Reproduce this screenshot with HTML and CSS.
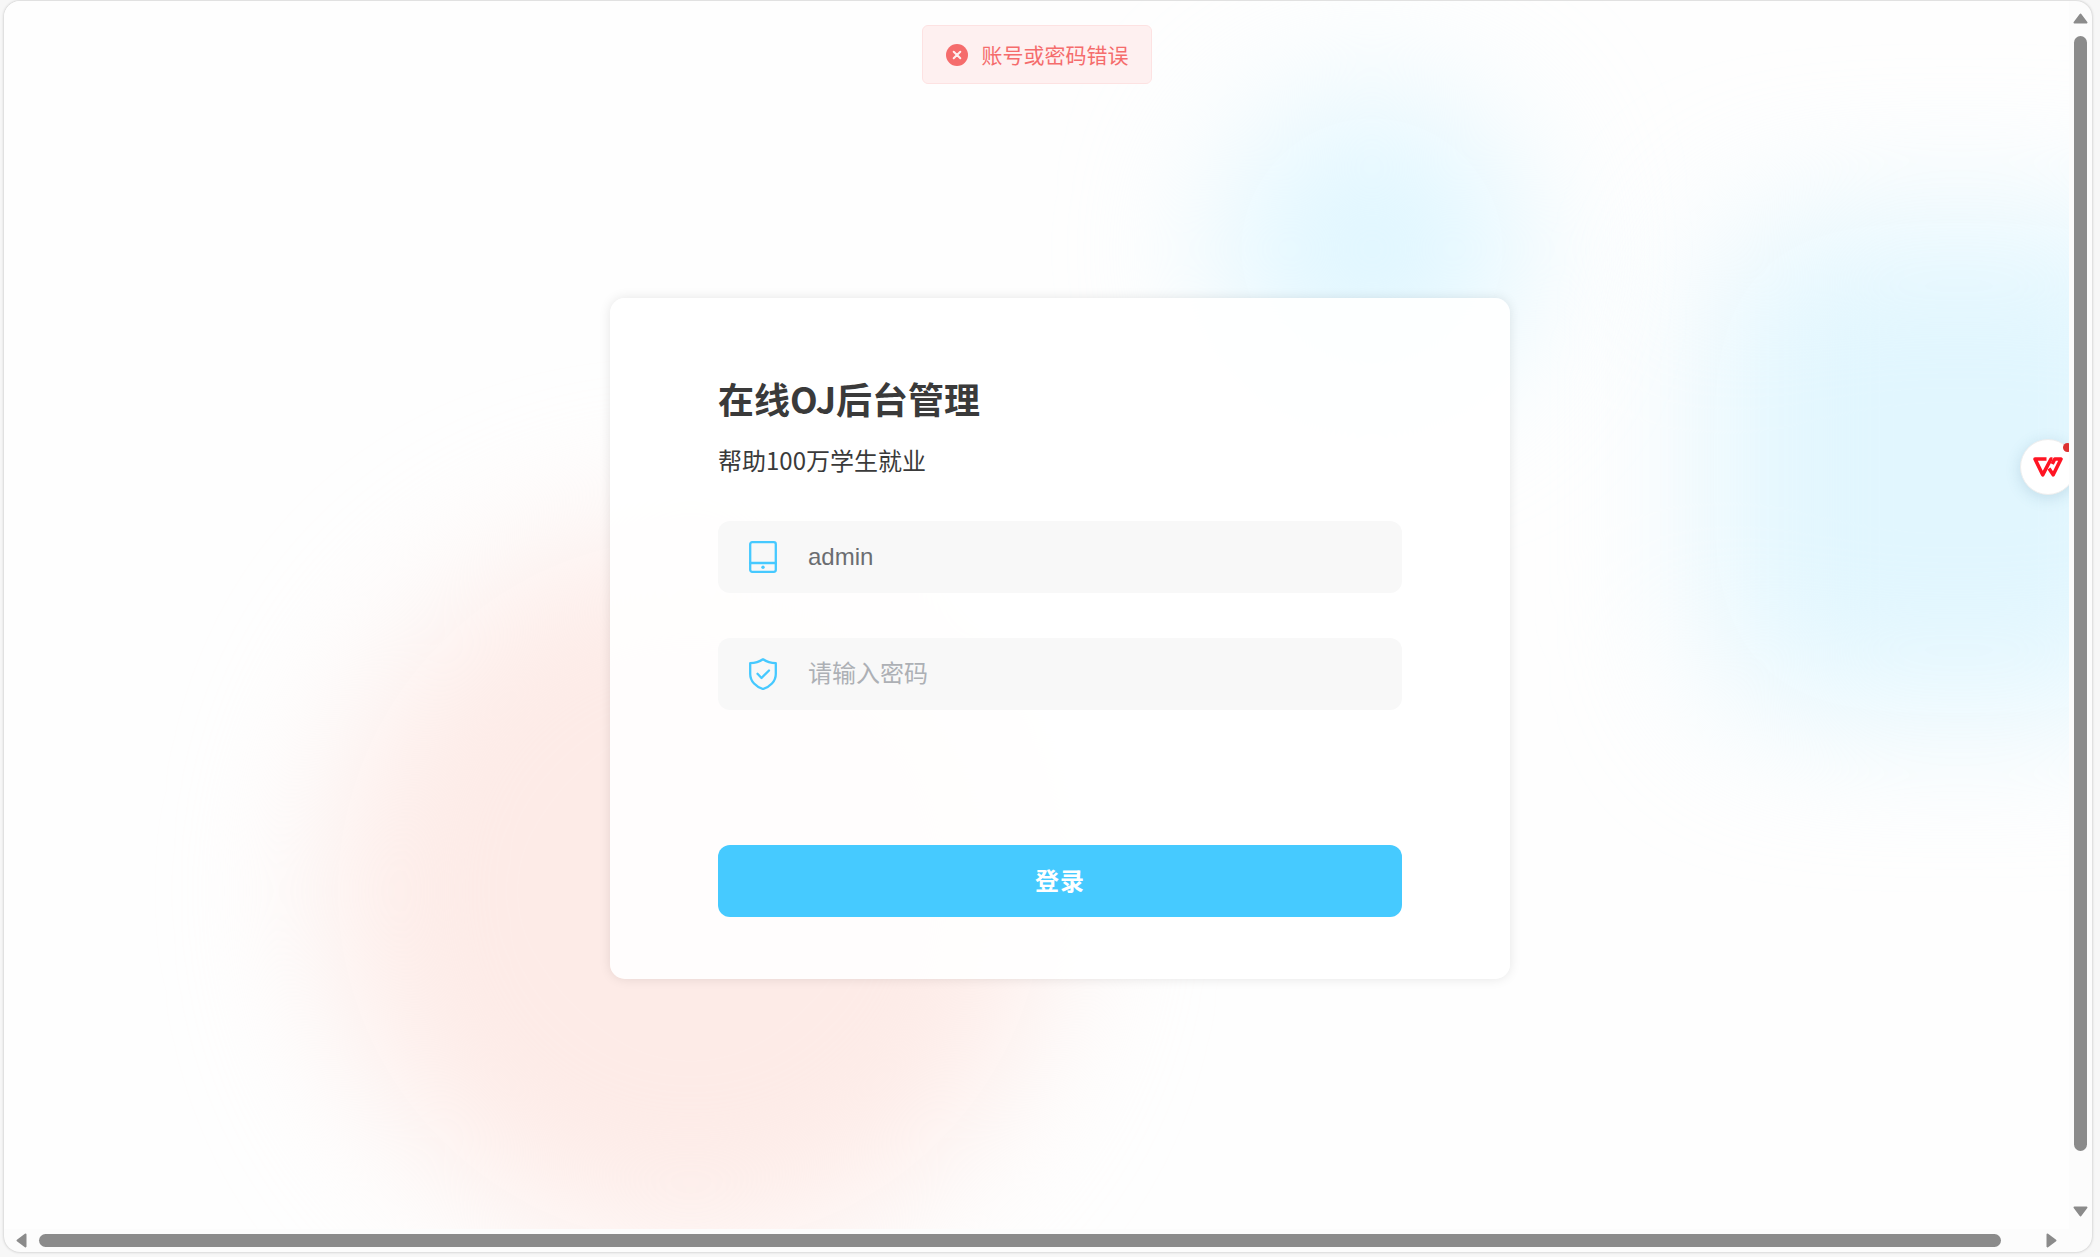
FILE: index.html
```html
<!DOCTYPE html>
<html lang="zh-CN">
<head>
<meta charset="utf-8">
<title>在线OJ后台管理</title>
<link rel="stylesheet" href="styles.css">
</head>
<body>
<div class="window">
  <div class="page">
    <div class="blob blob-red"></div>
    <div class="blob blob-round"></div>
    <div class="blob blob-square"></div>
    <main class="stage">
      <form class="card">
        <h1 class="title">在线OJ后台管理</h1>
        <p class="subtitle">帮助100万学生就业</p>
        <div class="field">
          <svg class="field-icon" viewBox="0 0 28 32" aria-hidden="true">
            <rect x="1.200" y="1.200" width="25.600" height="29.600" rx="2"/>
            <path d="M1 22h26"/>
            <circle class="dot" cx="14" cy="26.200" r="1.700"/>
          </svg>
          <input class="field-input" type="text" aria-label="账号" value="admin">
        </div>
        <div class="field">
          <svg class="field-icon" viewBox="0 0 28 32" aria-hidden="true">
            <path d="M14 1.300C10.500 3.800 6 5.200 1.200 5.200V16c0 7.500 6 13 12.800 15 6.800-2 12.800-7.500 12.800-15V5.200C22 5.200 17.500 3.800 14 1.300z"/>
            <path d="M8.500 15.800l4 4.200 7.500-7.500"/>
          </svg>
          <input class="field-input" type="password" aria-label="密码" placeholder="请输入密码">
        </div>
        <button class="submit" type="button">登录</button>
      </form>
    </main>
    <div class="toast" role="alert">
      <svg class="toast-icon" viewBox="0 0 22 22" aria-hidden="true">
        <circle cx="11" cy="11" r="11"/>
        <path d="M7.700 7.700l6.600 6.600m0-6.600l-6.600 6.600"/>
      </svg>
      <span>账号或密码错误</span>
    </div>
    <button class="assistant" type="button" aria-label="WPS">
      <svg class="assistant-logo" viewBox="0 0 30 20" aria-hidden="true">
        <path d="M13.500 2H2l7.700 15.800L18 2h1.500"/>
        <path d="M16 11.500l4.200 6.300L28 2h-6.200l-2.600 5"/>
      </svg>
    </button>
    <span class="badge"></span>
  </div>
  <div class="bar bar-v">
    <svg class="arrow" viewBox="0 0 15 11" aria-hidden="true"><path d="M7.500 1.500L13.500 9.500H1.500z"/></svg>
    <div class="thumb thumb-v"></div>
    <svg class="arrow" viewBox="0 0 15 11" aria-hidden="true"><path d="M7.500 9.500L13.500 1.500H1.500z"/></svg>
  </div>
  <div class="bar bar-h">
    <svg class="arrow arrow-side" viewBox="0 0 11 15" aria-hidden="true"><path d="M1.500 7.500L9.500 13.500V1.500z"/></svg>
    <div class="thumb thumb-h"></div>
    <svg class="arrow arrow-side" viewBox="0 0 11 15" aria-hidden="true"><path d="M9.500 7.500L1.500 13.500V1.500z"/></svg>
  </div>
</div>
</body>
</html>
```
FILE: styles.css
```css
* { box-sizing: border-box; }

body {
  margin: 0;
  padding: 1px 8px 5px 4px;
  height: 100vh;
  background: #f7f7f7;
  font-family: "Liberation Sans", "Noto Sans CJK SC", sans-serif;
}

.window {
  display: grid;
  grid-template-columns: 1fr 23px;
  grid-template-rows: 1fr 23px;
  height: 100%;
  overflow: hidden;
  border-radius: 16px;
  background: #fcfcfc;
  box-shadow: 0 0 3px rgba(0, 0, 0, 0.25);
}

.page {
  position: relative;
  overflow: hidden;
  background: #fefefe;
}

/* Soft coloured lights behind the card */
.blob {
  position: absolute;
  filter: blur(75px);
}

.blob-red {
  left: 327px;
  top: 530px;
  width: 720px;
  height: 720px;
  border-radius: 50%;
  background: #fdebe7;
}

.blob-round {
  left: 1218px;
  top: 98px;
  width: 300px;
  height: 300px;
  border-radius: 50%;
  background: #dff6ff;
}

.blob-square {
  left: 1710px;
  top: 222px;
  width: 490px;
  height: 490px;
  border-radius: 100px;
  background: #e1f6fe;
}

.stage {
  position: relative;
  display: flex;
  justify-content: center;
  padding: 297px 0 0 47px;
}

.card {
  display: flex;
  flex-direction: column;
  width: 900px;
  padding: 72px 108px 62px;
  border-radius: 15px;
  background: rgba(255, 255, 255, 0.9);
  box-shadow: 0 0 12px rgba(0, 0, 0, 0.1);
  color: #3a3a3a;
}

.title {
  margin: 0;
  font: 700 36px/56px "Noto Sans CJK SC", sans-serif;
}

.subtitle {
  margin: 0 0 27px;
  font: 400 24px/68px "Noto Sans CJK SC", sans-serif;
}

.field {
  display: flex;
  align-items: center;
  gap: 31px;
  height: 72px;
  margin-bottom: 45px;
  padding: 0 31px;
  border-radius: 12px;
  background: #f8f8f8;
}

.field-icon {
  width: 28px;
  height: 32px;
  fill: none;
  stroke: #46c9ff;
  stroke-width: 2.3;
  stroke-linecap: round;
  stroke-linejoin: round;
}

.dot { fill: #46c9ff; stroke: none; }

.field-input {
  flex: 1;
  min-width: 0;
  padding: 0;
  border: 0;
  outline: 0;
  background: none;
  color: #6b6d71;
  font: 24px/36px "Liberation Sans", "Noto Sans CJK SC", sans-serif;
}

.field-input::placeholder { color: #adb0b5; opacity: 1; }

.submit {
  height: 72px;
  margin-top: 90px;
  padding: 0 0 2px;
  border: 0;
  border-radius: 12px;
  background: #46caff;
  color: #fff;
  font: 700 24px/36px "Noto Sans CJK SC", sans-serif;
  letter-spacing: 1px;
}

.toast {
  position: absolute;
  left: 50%;
  top: 24px;
  display: flex;
  align-items: center;
  gap: 14px;
  height: 59px;
  padding: 0 22px 0 23px;
  border: 1px solid #fde2e2;
  border-radius: 6px;
  background: #fef0f0;
  color: #f56c6c;
  font: 21px/30px "Noto Sans CJK SC", sans-serif;
  transform: translateX(-50%);
}

.toast span { padding-bottom: 2px; }

.toast-icon {
  width: 22px;
  height: 22px;
  fill: #f56c6c;
  stroke-linecap: round;
}

.toast-icon path {
  fill: none;
  stroke: #fef0f0;
  stroke-width: 2;
}

.assistant {
  position: absolute;
  right: -7px;
  top: 438px;
  display: flex;
  align-items: center;
  justify-content: center;
  width: 56px;
  height: 56px;
  padding: 0;
  border: 1px solid #eee;
  border-radius: 50%;
  background: #fff;
  box-shadow: 0 3px 15px rgba(60, 120, 150, 0.2);
}

.assistant-logo {
  width: 30px;
  height: 20px;
  fill: none;
  stroke: #ff1423;
  stroke-width: 3.6;
  stroke-linejoin: round;
}

.badge {
  position: absolute;
  right: -3px;
  top: 442px;
  width: 9px;
  height: 9px;
  border-radius: 50%;
  background: #dc3232;
}

.bar {
  display: flex;
  align-items: center;
}

.bar-v {
  flex-direction: column;
  gap: 12px;
  padding: 12px 0;
}

.bar-h {
  gap: 12px;
  padding: 0 12px;
}

.thumb {
  border-radius: 7px;
  background: #8b8b8b;
}

.thumb-v {
  width: 13px;
  flex: 1;
  margin-bottom: 43px;
}

.thumb-h {
  height: 13px;
  flex: 1;
  margin-right: 33px;
}

.arrow {
  width: 15px;
  height: 11px;
  fill: #8b8b8b;
  stroke: #8b8b8b;
  stroke-width: 2;
  stroke-linejoin: round;
}

.arrow-side {
  width: 11px;
  height: 15px;
}
```
